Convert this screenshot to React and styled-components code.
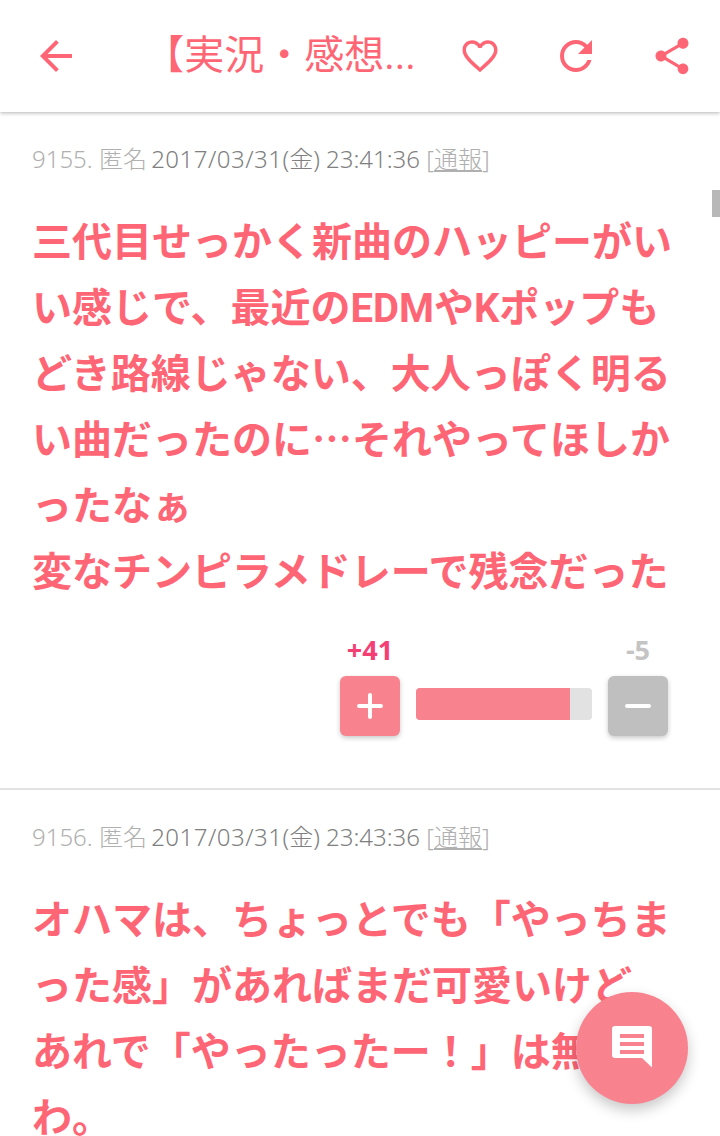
import React from 'react';
import styled, { createGlobalStyle } from 'styled-components';

const PINK = '#ff6675';
const SOFT_PINK = '#f9828f';

const App = () => {
  return (
    <Page>
      <GlobalStyle />
      <Header>
        <IconButton aria-label="back">
          <svg viewBox="0 0 24 24"><path d="M20 11H7.830l5.590-5.590L12 4l-8 8 8 8 1.410-1.410L7.830 13H20v-2z" /></svg>
        </IconButton>
        <Title>【実況・感想...</Title>
        <Actions>
          <IconButton $size={42} aria-label="favorite">
            <svg viewBox="0 0 24 24"><path d="M16.5 3c-1.74 0-3.41.81-4.5 2.09C10.91 3.81 9.24 3 7.5 3 4.42 3 2 5.42 2 8.5c0 3.78 3.4 6.86 8.55 11.54L12 21.35l1.45-1.32C18.6 15.36 22 12.28 22 8.5 22 5.42 19.58 3 16.5 3zm-4.4 15.55l-.1.1-.1-.1C7.14 14.24 4 11.39 4 8.5 4 6.5 5.5 5 7.5 5c1.54 0 3.04.99 3.57 2.36h1.87C13.46 5.99 14.96 5 16.5 5c2 0 3.5 1.5 3.5 3.5 0 2.89-3.14 5.74-7.9 10.05z" /></svg>
          </IconButton>
          <IconButton aria-label="reload">
            <svg viewBox="0 0 24 24"><path d="M17.65 6.35C16.2 4.9 14.21 4 12 4c-4.42 0-7.99 3.58-7.99 8s3.57 8 7.99 8c3.73 0 6.84-2.55 7.73-6h-2.08c-.82 2.33-3.04 4-5.65 4-3.31 0-6-2.69-6-6s2.69-6 6-6c1.66 0 3.14.69 4.22 1.78L13 11h7V4l-2.35 2.35z" /></svg>
          </IconButton>
          <IconButton $size={44} aria-label="share">
            <svg viewBox="0 0 24 24"><path d="M18 16.08c-.76 0-1.44.3-1.96.77L8.91 12.7c.05-.23.09-.46.09-.7s-.04-.47-.09-.7l7.05-4.11c.54.5 1.25.81 2.04.81 1.66 0 3-1.34 3-3s-1.34-3-3-3-3 1.34-3 3c0 .24.04.47.09.7L8.04 9.81C7.5 9.31 6.79 9 6 9c-1.66 0-3 1.34-3 3s1.34 3 3 3c.79 0 1.5-.31 2.04-.81l7.12 4.16c-.05.21-.08.43-.08.65 0 1.61 1.31 2.92 2.92 2.92 1.61 0 2.92-1.31 2.92-2.92s-1.31-2.92-2.92-2.92z" /></svg>
          </IconButton>
        </Actions>
      </Header>

      <Main>
        <Post>
          <Meta>
            <Faint>9155. 匿名 </Faint>
            <DateText>2017/03/31</DateText>(金) 23:41:36 <Faint>[<u>通報</u>]</Faint>
          </Meta>
          <Body>
            三代目せっかく新曲のハッピーがいい感じで、最近の<Latin>EDM</Latin>や<Latin>K</Latin>ポップもどき路線じゃない、大人っぽく明るい曲だったのに…それやってほしかったなぁ
            <br />
            変なチンピラメドレーで残念だった
          </Body>
          <Votes>
            <Count $plus>+41</Count>
            <span />
            <Count>-5</Count>
            <VoteButton $plus aria-label="plus">
              <svg viewBox="0 0 26 26"><path d="M13 2v22M2 13h22" /></svg>
            </VoteButton>
            <Meter>
              <MeterFill style={{ width: `${(154 / 176) * 100}%` }} />
            </Meter>
            <VoteButton aria-label="minus">
              <svg viewBox="0 0 26 26"><path d="M2 13h22" /></svg>
            </VoteButton>
          </Votes>
        </Post>
        <Post>
          <Meta>
            <Faint>9156. 匿名 </Faint>
            <DateText>2017/03/31</DateText>(金) 23:43:36 <Faint>[<u>通報</u>]</Faint>
          </Meta>
          <Body>
            オハマは、ちょっとでも「やっちまった感」があればまだ可愛いけど
            <br />
            あれで「やったったー！」は無理だわ。
          </Body>
        </Post>
      </Main>

      <ScrollThumb />
      <Fab aria-label="comment">
        <svg viewBox="0 0 40 44">
          <path fillRule="evenodd" d="M3 0h34a3 3 0 0 1 3 3v38.500L30 32H3a3 3 0 0 1-3-3V3a3 3 0 0 1 3-3zM8 8v4h24V8zM8 16v4h24v-4zM8 24v4h24v-4z" />
        </svg>
      </Fab>
    </Page>
  );
};

// --- Global ---

const GlobalStyle = createGlobalStyle`
  html, body {
    margin: 0;
    padding: 0;
    background: #fff;
  }
  body {
    font-family: "Noto Sans CJK JP", "Noto Sans", sans-serif;
  }
`;

// --- Styled Components ---

const Page = styled.div`
  position: relative;
  width: 720px;
  height: 1136px;
  overflow: hidden;
  background: #fff;
`;

const Header = styled.header`
  display: flex;
  align-items: center;
  height: 112px;
  padding: 0 24px 0 32px;
  box-sizing: border-box;
  background: #fff;
  box-shadow: 0 1px 4px rgba(0, 0, 0, 0.3);
`;

const IconButton = styled.button`
  display: flex;
  align-items: center;
  justify-content: center;
  width: 48px;
  height: 48px;
  padding: 0;
  border: 0;
  background: none;

  svg {
    flex: none;
    width: ${(p) => p.$size || 48}px;
    height: ${(p) => p.$size || 48}px;
    fill: ${PINK};
  }
`;

const Title = styled.h1`
  flex: 1;
  margin: 0;
  padding-left: 24px;
  color: ${PINK};
  font-family: "Roboto", "Noto Sans CJK JP", sans-serif;
  font-size: 40px;
  font-weight: 400;
  line-height: 48px;
  text-align: center;
  white-space: nowrap;
`;

const Actions = styled.div`
  display: flex;
  gap: 48px;
`;

const Main = styled.main`
  display: flex;
  flex-direction: column;
`;

const Post = styled.article`
  padding: 27px 32px 52px;
  border-bottom: 2px solid #e2e2e2;
`;

const Meta = styled.div`
  color: #808080;
  font-family: "Noto Sans", "Noto Sans CJK JP", sans-serif;
  font-size: 24px;
  font-weight: 300;
  line-height: 40px;
  white-space: nowrap;
`;

const Faint = styled.span`
  color: #b0b0b0;
`;

const DateText = styled.span`
  margin-left: -2px;
  letter-spacing: 0.5px;
`;

const Body = styled.p`
  margin: 27px 0 0;
  color: ${PINK};
  font-size: 40px;
  font-weight: 700;
  line-height: 66px;
`;

const Latin = styled.span`
  font-family: "Roboto", sans-serif;
  line-height: 1;
`;

const Votes = styled.div`
  display: grid;
  grid-template-columns: 60px 176px 60px;
  column-gap: 16px;
  justify-content: end;
  align-items: start;
  margin: 30px 20px 0 0;
`;

const Count = styled.div`
  height: 44px;
  color: ${(p) => (p.$plus ? '#f43f75' : '#c4c4c4')};
  font-family: "Open Sans", sans-serif;
  font-size: 27px;
  font-weight: 700;
  line-height: 36px;
  text-align: center;
`;

const VoteButton = styled.button`
  display: flex;
  align-items: center;
  justify-content: center;
  width: 60px;
  height: 60px;
  padding: 0;
  border: 0;
  border-radius: 6px;
  background: ${(p) => (p.$plus ? SOFT_PINK : '#bfbfbf')};
  box-shadow: 0 2px 5px rgba(0, 0, 0, 0.22);

  svg {
    width: 26px;
    height: 26px;
    fill: none;
    stroke: #fff;
    stroke-width: 4;
    stroke-linecap: round;
  }
`;

const Meter = styled.div`
  height: 32px;
  margin-top: 12px;
  border-radius: 4px;
  overflow: hidden;
  background: #e2e2e2;
`;

const MeterFill = styled.div`
  height: 100%;
  background: ${SOFT_PINK};
`;

const ScrollThumb = styled.div`
  position: absolute;
  top: 190px;
  right: 0;
  width: 8px;
  height: 27px;
  background: #b8b8b8;
`;

const Fab = styled.button`
  position: absolute;
  top: 992px;
  left: 576px;
  display: flex;
  align-items: center;
  justify-content: center;
  width: 112px;
  height: 112px;
  padding: 0;
  border: 0;
  border-radius: 50%;
  background: ${SOFT_PINK};
  box-shadow: 0 6px 14px rgba(0, 0, 0, 0.22);

  svg {
    width: 40px;
    height: 44px;
    fill: #fff;
  }
`;

export default App;
